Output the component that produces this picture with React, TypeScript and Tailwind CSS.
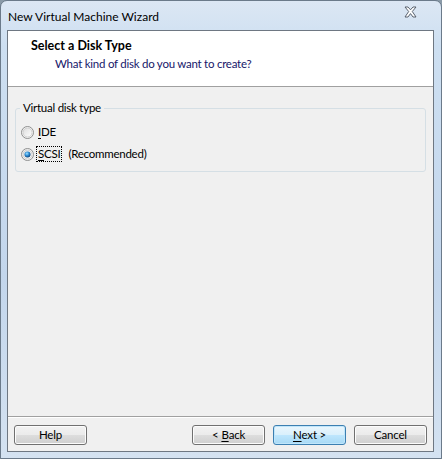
import React from "react";

const font = { fontFamily: 'Lato, "Noto Sans", sans-serif' };

function Radio({ checked }: { checked?: boolean }) {
  return (
    <svg width="13" height="13" viewBox="0 0 13 13" className="shrink-0">
      <defs>
        <linearGradient id={checked ? "rgc" : "rgu"} x1="0" y1="0" x2="1" y2="1">
          <stop offset="0" stopColor="#dcdcdc" />
          <stop offset="1" stopColor="#ffffff" />
        </linearGradient>
        <radialGradient id="dot" cx="0.4" cy="0.35" r="0.7">
          <stop offset="0" stopColor="#9fe0ff" />
          <stop offset="0.5" stopColor="#2a8ad4" />
          <stop offset="1" stopColor="#0c3a6b" />
        </radialGradient>
      </defs>
      <circle cx="6.5" cy="6.5" r="6" fill="#f4f4f4" stroke="#8e8f8f" strokeWidth="1" />
      <circle cx="6.5" cy="6.5" r="4.5" fill={`url(#${checked ? "rgc" : "rgu"})`} stroke="#c8c8c8" strokeWidth="0.8" />
      {checked && <circle cx="6.5" cy="6.5" r="3" fill="url(#dot)" />}
    </svg>
  );
}

function Btn({
  children,
  def,
}: {
  children: React.ReactNode;
  def?: boolean;
}) {
  return (
    <div
      className={
        "w-[73px] h-[20px] rounded-[3px] border flex items-center justify-center text-[11.5px] tracking-[-0.2px] text-black " +
        (def
          ? "border-[#3c7fb1] bg-[linear-gradient(#eaf6fd_0%,#d9f0fc_50%,#bee6fd_51%,#a7d9f5_100%)] shadow-[inset_0_0_0_1px_#c0e6fb]"
          : "border-[#707070] bg-[linear-gradient(#f2f2f2_0%,#ebebeb_50%,#dddddd_51%,#cfcfcf_100%)] shadow-[inset_0_0_0_1px_#fcfcfc]")
      }
    >
      {children}
    </div>
  );
}

export default function App() {
  return (
    <div className="w-[442px] h-[459px] bg-[#8a9aa8]" style={font}>
      <div className="w-[442px] h-[459px] rounded-t-[7px] border border-[#6b7a8a] bg-[linear-gradient(180deg,#dce7f4_0%,#cddff1_10%,#c3d6ec_60%,#d4e2f1_100%)] flex flex-col">
        {/* title bar */}
        <div className="h-[29px] flex items-center pl-[7px] pr-[24px] justify-between">
          <span className="text-[12px] text-black leading-none mt-[2px]">New Virtual Machine Wizard</span>
          <svg width="13" height="12" viewBox="0 0 13 12" className="mb-[8px]">
            <path
              d="M1 1 L4 1 L6.5 3.8 L9 1 L12 1 L8.3 5.5 L12 11 L9 11 L6.5 7.6 L4 11 L1 11 L4.7 5.5 Z"
              fill="#ffffff"
              stroke="#4a5260"
              strokeWidth="0.9"
              strokeLinejoin="round"
            />
          </svg>
        </div>
        {/* client */}
        <div className="ml-[6px] mr-[7px] h-[422px] border border-[#6e7782] bg-[#f0f0f0] flex flex-col">
          <div className="h-[56px] bg-white border-b border-[#a0a0a0] flex flex-col pl-[23px] pt-[6px]">
            <div className="text-[12.5px] font-bold text-black leading-[18px]">Select a Disk Type</div>
            <div className="text-[11.5px] tracking-[-0.25px] text-[#16166a] leading-[18px] pl-[24px]">
              What kind of disk do you want to create?
            </div>
          </div>
          <div className="flex-1 px-[7px] pt-[21px]">
            <div className="relative h-[64px] border border-[#d5dfe5] rounded-[3px]">
              <span className="absolute -top-[9px] left-[4px] px-[3px] bg-[#f0f0f0] text-[11.5px] tracking-[-0.25px] leading-[16px] text-black">
                Virtual disk type
              </span>
              <div className="flex flex-col pl-[5px] pt-[16px] gap-[8px] text-[11.5px] tracking-[-0.25px]">
                <div className="flex items-center h-[14px]">
                  <Radio />
                  <span className="ml-[4px] leading-[14px] text-black">
                    <span className="underline underline-offset-2">I</span>DE
                  </span>
                </div>
                <div className="flex items-center h-[14px]">
                  <Radio checked />
                  <span className="ml-[3px] leading-[14px] text-black outline outline-1 outline-dotted outline-black px-[1px]">
                    <span className="underline underline-offset-2">S</span>CSI
                  </span>
                  <span className="ml-[7px] leading-[14px] text-black">(Recommended)</span>
                </div>
              </div>
            </div>
          </div>
          <div className="border-t border-[#a0a0a0] shadow-[0_1px_0_#ffffff]" />
          <div className="h-[34px] flex items-start pt-[8px] px-[6px]">
            <Btn>Help</Btn>
            <div className="flex-1" />
            <div className="flex gap-[8px]">
              <Btn>
                &lt; <span className="underline underline-offset-2 ml-[3px]">B</span>ack
              </Btn>
              <Btn def>
                <span className="underline underline-offset-2">N</span>ext &gt;
              </Btn>
              <Btn>Cancel</Btn>
            </div>
          </div>
        </div>
      </div>
    </div>
  );
}
